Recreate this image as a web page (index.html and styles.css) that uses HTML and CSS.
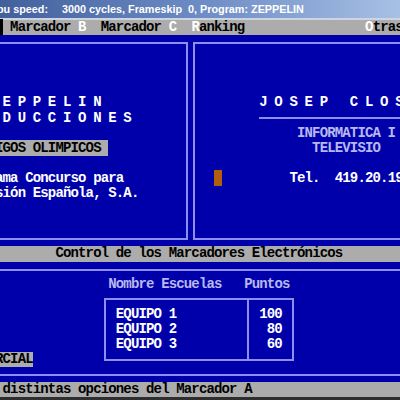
FILE: index.html
```html
<!DOCTYPE html>
<html lang="es">
<head>
    <meta charset="UTF-8">
    <title>ZEPPELIN - Marcadores</title>
    <link rel="stylesheet" href="styles.css">
</head>
<body>
    <!-- Barra de título de la ventana -->
    <div class="titlebar"><span class="t1">pu speed:</span><span class="t2">3000 cycles, Frameskip  0, Program: ZEPPELIN</span></div>

    <!-- Pantalla en modo texto -->
    <div class="dos">
        <div class="row menu"><span class="blk"> </span> Marcador <span class="hot">B</span>  Marcador <span class="hot">C</span>  <span class="hot">R</span>anking                <span class="hot">O</span>tras</div>

        <div class="panels">
            <div class="panel left">
                <div class="row"></div>
                <div class="row"></div>
                <div class="row"></div>
                <div class="row"> E P P E L I N</div>
                <div class="row"> D U C C I O N E S</div>
                <div class="row"></div>
                <div class="row"><span class="sel">IGOS OLIMPICOS </span></div>
                <div class="row"></div>
                <div class="row">ama Concurso para</div>
                <div class="row">sión Española, S.A.</div>
            </div>
            <div class="panel right">
                <div class="row"></div>
                <div class="row"></div>
                <div class="row"></div>
                <div class="row">        J O S E P   C L O S</div>
                <div class="hr"></div>
                <div class="row dim">             INFORMATICA I</div>
                <div class="row dim">               TELEVISIO</div>
                <div class="row"></div>
                <div class="row">  <span class="cursor"> </span>         Tel.  419.20.19</div>
            </div>
        </div>

        <div class="row bar">        Control de los Marcadores Electrónicos</div>
        <div class="row rule"></div>
        <div class="row dim">               Nombre Escuelas   Puntos</div>

        <!-- Tabla de puntuaciones -->
        <div class="scores">
            <div class="side">
                <div class="row sel">RCIAL</div>
            </div>
            <div class="teams">
                <div class="names">
                    <div class="row">EQUIPO 1</div>
                    <div class="row">EQUIPO 2</div>
                    <div class="row">EQUIPO 3</div>
                </div>
                <div class="pts">
                    <div class="row">100</div>
                    <div class="row"> 80</div>
                    <div class="row"> 60</div>
                </div>
            </div>
        </div>

        <div class="row rule"></div>
        <div class="row bar"> distintas opciones del Marcador A</div>
    </div>
</body>
</html>
```

FILE: styles.css
```css
* {
    box-sizing: border-box;
}
html, body {
    margin: 0;
}
body {
    width: 400px;
    height: 400px;
    overflow: hidden;
    background-color: #2e2e2e;
}

/* barra de título */
.titlebar {
    height: 20px;
    padding-top: 3px;
    line-height: 15px;
    border-bottom: 2px solid #cfd5e0;
    background: linear-gradient(90deg, #42609c 0%, #6d8bc4 50%, #a7c0e5 100%);
    color: #fff;
    font: bold 10.8px "Liberation Sans", Arial, sans-serif;
    white-space: pre;
    overflow: hidden;
}
.t1 {
    display: inline-block;
    width: 65px;
    margin-left: -3px;
}

/* pantalla 80x25 */
.dos {
    --cw: 7.55px;
    --line: #8e8ef2;
    margin-left: -5px;
    width: 405px;
    background-color: #0000aa;
    color: #fff;
    font: bold 14px/15.1px "Liberation Mono", "DejaVu Sans Mono", monospace;
    letter-spacing: -0.85px;
}
.row {
    height: 15.1px;
    white-space: pre;
}
.menu {
    background-color: #acacac;
    color: #000;
}
.menu .hot {
    color: #fff;
}
.menu .blk {
    background-color: #000;
}
.dim {
    color: #b8b8f0;
}
.sel {
    background-color: #acacac;
    color: #000;
}
.bar {
    background-color: #acacac;
    color: #000;
}
.rule {
    background: linear-gradient(transparent 6.55px, var(--line) 6.55px, var(--line) 8.55px, transparent 8.55px);
}
.cursor {
    background-color: #b0600c;
}

/* recuadros superiores */
.panels {
    display: flex;
    align-items: flex-start;
    height: 211.4px;
}
.panel {
    margin-top: 6.9px;
    height: 198.2px;
    padding-top: 6.2px;
    border: 2px solid var(--line);
    overflow: hidden;
}
.panel.left {
    width: 192.7px;
    border-left: 0;
}
.panel.right {
    flex: 1;
    margin-left: 5.6px;
    padding-left: 3.55px;
    border-right: 0;
}
.hr {
    height: 2px;
    margin: 6.55px 0 6.55px calc(8 * var(--cw));
    background-color: var(--line);
}

/* tabla de equipos */
.scores {
    display: flex;
    height: 75.5px;
}
.side {
    width: calc(5 * var(--cw));
    display: flex;
    flex-direction: column;
    justify-content: flex-end;
}
.teams {
    display: flex;
    width: 190.2px;
    height: 62.4px;
    margin: 6.55px 0 0 71.25px;
    border: 2px solid var(--line);
}
.names {
    width: 141px;
    padding: 6.55px 0 0 9.8px;
}
.pts {
    flex: 1;
    padding: 6.55px 0 0 10.25px;
    border-left: 2px solid var(--line);
}
```
